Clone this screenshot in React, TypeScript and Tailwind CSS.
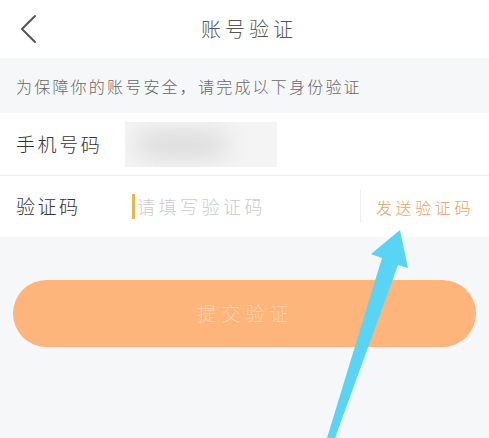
import React from "react";

const font = { fontFamily: '"Noto Sans CJK SC", "Noto Sans", sans-serif' };

export default function App() {
  return (
    <div
      className="relative w-[489px] h-[438px] overflow-hidden bg-[#f6f7f9] font-light"
      style={font}
    >
      {/* header */}
      <div className="grid grid-cols-[1fr_auto_1fr] items-center h-[58px] bg-white">
        <div className="pl-[19px] flex items-center">
          <svg width="18" height="30" viewBox="0 0 18 30" fill="none">
            <path d="M16 2 L3 15 L16 28" stroke="#555" strokeWidth="2" strokeLinecap="round" strokeLinejoin="round" />
          </svg>
        </div>
        <div className="text-[20px] leading-none tracking-[4px] text-[#555] pl-[9px]">账号验证</div>
        <div />
      </div>

      {/* notice */}
      <div className="h-[55px] flex items-center pl-[16px] text-[16px] tracking-[2.2px] text-[#666]">
        为保障你的账号安全，请完成以下身份验证
      </div>

      {/* phone row */}
      <div className="h-[63px] bg-white flex items-center border-b border-[#eeeeee]">
        <div className="w-[125px] shrink-0 pl-[16px] text-[19px] tracking-[2.6px] text-[#333]">手机号码</div>
        <div className="relative w-[152px] h-[45px] bg-[#f4f4f4] overflow-hidden">
          <div className="absolute left-[12px] top-[10px] w-[90px] h-[25px] rounded-full bg-[#d9d9d9] blur-md" />
        </div>
      </div>

      {/* code row */}
      <div className="h-[61px] bg-white flex items-center">
        <div className="w-[132px] shrink-0 pl-[16px] text-[19px] tracking-[2.5px] text-[#333]">验证码</div>
        <div className="flex-1 flex items-center">
          <div className="w-[3px] h-[25px] bg-[#e8b74c]" />
          <span className="ml-[2px] text-[18px] tracking-[3.5px] text-[#cbcbcb]">请填写验证码</span>
        </div>
        <div className="w-px h-[33px] bg-[#eeeeee]" />
        <div className="pl-[15px] pr-[15px] text-[16px] tracking-[3.6px] text-[#e9a262]">发送验证码</div>
      </div>

      {/* submit */}
      <div className="px-[13px] pt-[43px]">
        <div className="h-[67px] rounded-full bg-[#fdb57b] flex items-center justify-center">
          <span className="text-[19px] tracking-[5px] text-[#fdd3b2] pl-[2px]">提交验证</span>
        </div>
      </div>

      {/* annotation arrow */}
      <svg className="absolute left-0 top-0 pointer-events-none" width="489" height="438" viewBox="0 0 489 438">
        <path
          d="M400 230 L408 268 L398 265 L335 438 L327 438 L382 258 L371 254 Z"
          fill="#58d4f5"
        />
      </svg>
    </div>
  );
}
